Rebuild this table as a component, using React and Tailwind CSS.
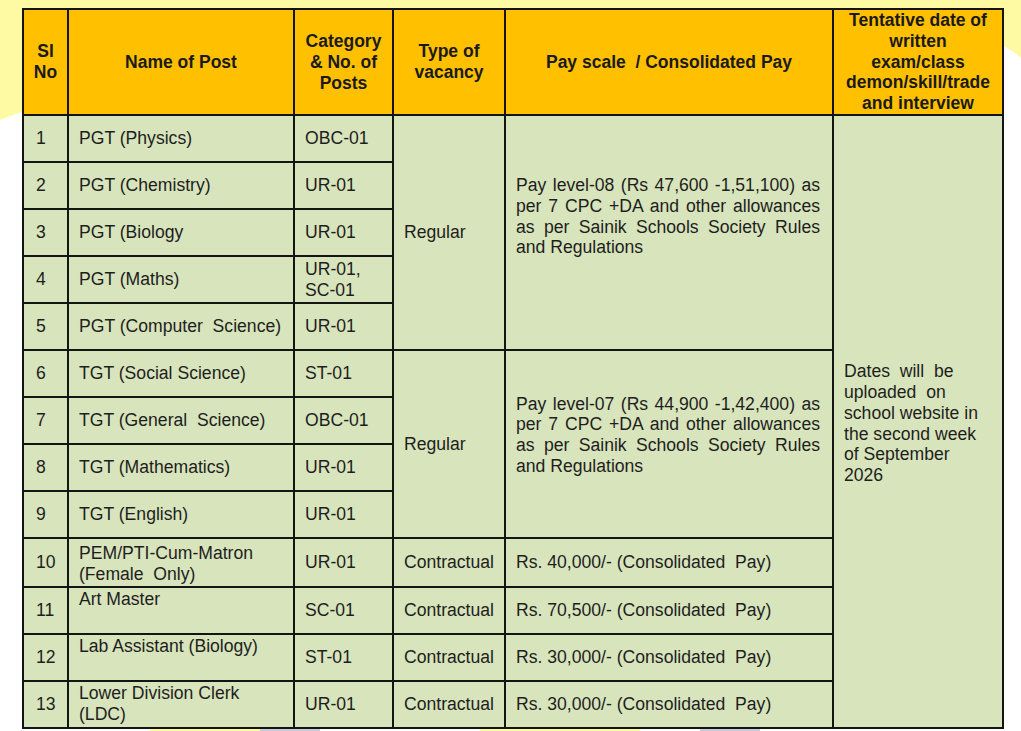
import React from 'react'

const rows = [
  { no: '1', name: 'PGT (Physics)', cat: 'OBC-01' },
  { no: '2', name: 'PGT (Chemistry)', cat: 'UR-01' },
  { no: '3', name: 'PGT (Biology', cat: 'UR-01' },
  { no: '4', name: 'PGT (Maths)', cat: ['UR-01,', 'SC-01'] },
  { no: '5', name: 'PGT (Computer\u00a0 Science)', cat: 'UR-01' },
  { no: '6', name: 'TGT (Social Science)', cat: 'ST-01' },
  { no: '7', name: 'TGT (General\u00a0 Science)', cat: 'OBC-01' },
  { no: '8', name: 'TGT (Mathematics)', cat: 'UR-01' },
  { no: '9', name: 'TGT (English)', cat: 'UR-01' },
]

const contract = [
  { no: '10', name: ['PEM/PTI-Cum-Matron', '(Female\u00a0 Only)'], cat: 'UR-01', pay: '40,000' },
  { no: '11', name: ['Art Master'], cat: 'SC-01', pay: '70,500' },
  { no: '12', name: ['Lab Assistant (Biology)'], cat: 'ST-01', pay: '30,000' },
  { no: '13', name: ['Lower Division Clerk', '(LDC)'], cat: 'UR-01', pay: '30,000' },
]

const cell = 'border-2 border-[#141414] px-[10px] align-middle whitespace-nowrap'
const head = 'border-2 border-[#141414] bg-[#ffc000] px-1 text-center align-middle font-bold text-[17.5px] whitespace-nowrap'

function Lines({ items }) {
  return items.map((t, i) => (
    <div key={i}>{t}</div>
  ))
}

function Backdrop() {
  return (
    <svg className="absolute inset-0 h-full w-full" viewBox="0 0 1021 731" preserveAspectRatio="none">
      <path d="M0 0 H1021 V58 Q1000 40 960 24 L900 10 H0 Z" fill="#fefaa4" />
      <path d="M0 0 H60 V100 Q30 108 0 120 Z" fill="#fefaa4" />
      <rect x="150" y="728" width="130" height="3" fill="#fefaa4" />
      <rect x="480" y="728" width="160" height="3" fill="#fefaa4" />
      <rect x="260" y="728" width="60" height="3" fill="#c9ccd8" />
      <rect x="700" y="728" width="60" height="3" fill="#c9ccd8" />
    </svg>
  )
}

export default function App() {
  return (
    <div className="relative h-[731px] w-[1021px] overflow-hidden bg-white" style={{ fontFamily: '"Liberation Sans", Arial, sans-serif' }}>
      <Backdrop />
      <div className="relative pl-[22px] pt-[8px]">
        <table className="w-[982px] table-fixed border-collapse text-[17.6px] leading-[21px] text-[#1e1e1e]">
          <colgroup>
            <col className="w-[45px]" />
            <col className="w-[226px]" />
            <col className="w-[99px]" />
            <col className="w-[112px]" />
            <col className="w-[328px]" />
            <col className="w-[170px]" />
          </colgroup>
          <thead>
            <tr className="h-[106px] text-[#1a1a1a]">
              <th className={head}>Sl<br />No</th>
              <th className={head}>Name of Post</th>
              <th className={head}>Category<br />&amp; No. of<br />Posts</th>
              <th className={head}>Type of<br />vacancy</th>
              <th className={head}>Pay scale&nbsp; / Consolidated Pay</th>
              <th className={`${head} leading-[20.8px]`}>Tentative date of<br />written<br />exam/class<br />demon/skill/trade<br />and interview</th>
            </tr>
          </thead>
          <tbody className="bg-[#d8e4bc]">
            {rows.map((r, i) => (
              <tr key={r.no} className="h-[47px]">
                <td className={`${cell} pl-[12px]`}>{r.no}</td>
                <td className={cell}>{r.name}</td>
                <td className={cell}>{Array.isArray(r.cat) ? <Lines items={r.cat} /> : r.cat}</td>
                {i % 5 === 0 && (
                  <>
                    <td rowSpan={i === 0 ? 5 : 4} className={cell}>Regular</td>
                    <td rowSpan={i === 0 ? 5 : 4} className="border-2 border-[#141414] pl-[10px] pr-[12px] align-middle text-justify leading-[20.7px]">
                      {i === 0 ? (
                        <div className="-mt-[32px]">Pay level-08 (Rs 47,600 -1,51,100) as per 7 CPC +DA and other allowances as per Sainik Schools Society Rules and Regulations</div>
                      ) : (
                        <div className="-mt-[18px]">Pay level-07 (Rs 44,900 -1,42,400) as per 7 CPC +DA and other allowances as per Sainik Schools Society Rules and Regulations</div>
                      )}
                    </td>
                  </>
                )}
                {i === 0 && (
                  <td rowSpan={13} className={`${cell} pr-[4px] leading-[20.8px]`}>
                    <div className="mt-[4px]">
                      Dates&nbsp; will&nbsp; be<br />
                      uploaded&nbsp; on<br />
                      school website in<br />
                      the second week<br />
                      of September<br />
                      2026
                    </div>
                  </td>
                )}
              </tr>
            ))}
            {contract.map((r, i) => (
              <tr key={r.no} className={i === 0 ? 'h-[49px]' : 'h-[47px]'}>
                <td className={`${cell} pl-[12px]`}>{r.no}</td>
                <td className={`${cell} align-top ${i === 0 ? 'pt-[4px]' : 'pt-[1px]'}`}>
                  <Lines items={r.name} />
                </td>
                <td className={cell}>{r.cat}</td>
                <td className={cell}>Contractual</td>
                <td className={cell}>Rs. {r.pay}/- (Consolidated&nbsp; Pay)</td>
              </tr>
            ))}
          </tbody>
        </table>
      </div>
    </div>
  )
}
